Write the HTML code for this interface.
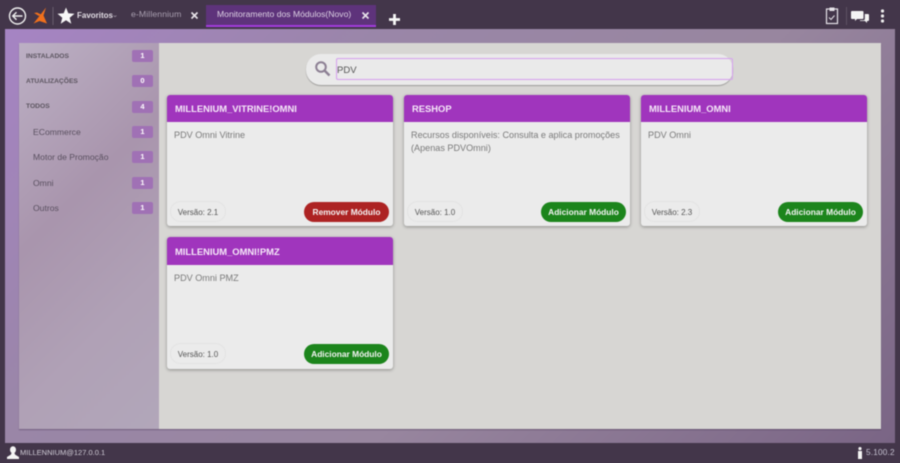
<!DOCTYPE html>
<html><head><meta charset="utf-8"><style>
*{box-sizing:border-box}
html,body{margin:0;padding:0;width:900px;height:463px;overflow:hidden;background:#43364a;font-family:"Liberation Sans",sans-serif}
#root{position:relative;width:900px;height:463px;filter:blur(.45px)}
.a{position:absolute;white-space:nowrap}
#frame{left:5px;top:29px;width:890px;height:414px;background:linear-gradient(135deg,#a684c4 0%,#9a86a8 30%,#98869f 60%,#7a6585 100%)}
#panel{left:19px;top:43px;width:862px;height:386px;background:#d7d6d3;box-shadow:0 1px 1px rgba(60,40,70,.4)}
#side{left:19px;top:43px;width:140px;height:386px;background:linear-gradient(135deg,#bcb0c4 0%,#a995ad 40%,#b0a1b6 70%,#b2a7ba 100%)}
.sl{font-size:6.7px;font-weight:bold;color:#5c5560;left:26px}
.si{font-size:8.6px;color:#5a5060;left:33px}
.bd{left:132px;width:21px;height:12px;background:#a071b5;border-radius:2px;color:#fff;font-size:7.5px;font-weight:bold;text-align:center;line-height:12px}
.card{width:226px;background:#ebebeb;border-radius:3px;box-shadow:0 1px 3px rgba(0,0,0,.35)}
.hd{left:0;top:0;width:100%;height:27px;background:#a035bd;border-radius:3px 3px 0 0;color:#f5e8f8;font-size:9.4px;font-weight:bold;line-height:28px;padding-left:8px}
.ds{left:7px;top:34px;font-size:9.1px;line-height:13px;color:#7a7a7a}
.vr{left:3px;top:106px;height:21px;width:56px;border:1px solid #e3e3e3;border-radius:11px;font-size:8px;color:#555;line-height:22px;text-align:center}
.bt{left:137px;top:107px;width:85px;height:20px;border-radius:10px;color:#f4f4f4;font-size:8.4px;font-weight:bold;line-height:21px;text-align:center}
.g{background:#1c851c}.r{background:#ad2323}
</style></head><body><div id="root">
<div class="a" id="frame"></div>
<div class="a" id="panel"></div>
<div class="a" id="side"></div>

<!-- top bar -->
<svg class="a" style="left:0;top:0" width="130" height="29" viewBox="0 0 130 29">
<circle cx="17.5" cy="16" r="8" fill="none" stroke="#eee" stroke-width="1.4"/>
<path d="M22.5 16H13M16.5 12.2L12.7 16l3.8 3.8" fill="none" stroke="#eee" stroke-width="1.4"/>
<path d="M46 7.5L41 14l-7.5 9.5 6-2.5 7.5 2.5-3.5-8z" fill="#f0701c"/>
<path d="M34 13l5 3 2-1.5-4-2z" fill="#f0701c"/>
<rect x="52.5" y="7" width="1" height="18" fill="#6a5e70"/>
<path d="M66 7.5l2.3 5.8 6.2.4-4.8 4 1.6 6-5.3-3.4-5.3 3.4 1.6-6-4.8-4 6.2-.4z" fill="#f7f7f7"/>
<path d="M113.5 15.5l1.5 1.2 1.5-1.2" fill="none" stroke="#9a8fa0" stroke-width=".8"/>
</svg>
<div class="a" style="left:77px;top:11px;font-size:8px;color:#e2dde4;font-weight:bold">Favoritos</div>
<div class="a" style="left:131px;top:9px;font-size:8.7px;color:#a99fb0;letter-spacing:.1px">e-Millennium</div>
<svg class="a" style="left:190px;top:11px" width="9" height="9"><path d="M1.5 1.5l6 6M7.5 1.5l-6 6" stroke="#e8e4ea" stroke-width="1.6"/></svg>
<div class="a" style="left:206px;top:5px;width:170px;height:22px;background:#5e337b;border-bottom:2px solid #a33bdc"></div>
<div class="a" style="left:217px;top:9px;font-size:8.6px;color:#ddd2e4">Monitoramento dos Módulos(Novo)</div>
<svg class="a" style="left:361px;top:11px" width="9" height="9"><path d="M1.5 1.5l6 6M7.5 1.5l-6 6" stroke="#e8e4ea" stroke-width="1.6"/></svg>
<svg class="a" style="left:389px;top:14px" width="11" height="11"><path d="M5.5 0v11M0 5.5h11" stroke="#f7f7f7" stroke-width="2.8"/></svg>

<svg class="a" style="left:820px;top:4px" width="70" height="24" viewBox="0 0 70 24">
<rect x="6.5" y="5" width="11" height="14.5" fill="none" stroke="#e6e3e8" stroke-width="1.2"/>
<rect x="9.5" y="3.5" width="5" height="3.5" fill="#e6e3e8"/>
<path d="M9 13.5l2 2 3.5-4" fill="none" stroke="#e6e3e8" stroke-width="1"/>
<rect x="26" y="3" width="1" height="18" fill="#5e5265"/>
<path d="M32 7h10.5a1 1 0 0 1 1 1v6a1 1 0 0 1-1 1H37l-2 2v-2h-3a1 1 0 0 1-1-1V8a1 1 0 0 1 1-1z" fill="#f4f4f4"/>
<path d="M44.8 10H48a1 1 0 0 1 1 1v5a1 1 0 0 1-1 1h-1v2l-2-2h-5v-.8h3.5a1.3 1.3 0 0 0 1.3-1.3z" fill="#f4f4f4"/>
<circle cx="62.5" cy="7" r="1.6" fill="#eee"/><circle cx="62.5" cy="12" r="1.6" fill="#eee"/><circle cx="62.5" cy="17" r="1.6" fill="#eee"/>
</svg>

<!-- sidebar -->
<div class="a sl" style="top:53px">INSTALADOS</div><div class="a bd" style="top:50px">1</div>
<div class="a sl" style="top:78px">ATUALIZAÇÕES</div><div class="a bd" style="top:75px">0</div>
<div class="a sl" style="top:103px">TODOS</div><div class="a bd" style="top:101px">4</div>
<div class="a si" style="top:127px">ECommerce</div><div class="a bd" style="top:126px">1</div>
<div class="a si" style="top:152px">Motor de Promoção</div><div class="a bd" style="top:151px">1</div>
<div class="a si" style="top:178px">Omni</div><div class="a bd" style="top:177px">1</div>
<div class="a si" style="top:203px">Outros</div><div class="a bd" style="top:202px">1</div>

<!-- search -->
<div class="a" style="left:306px;top:54px;width:427px;height:31px;background:#eaeaea;border-radius:15px;box-shadow:0 1px 1px rgba(0,0,0,.28)"></div>
<svg class="a" style="left:314px;top:60px" width="17" height="17" viewBox="0 0 17 17"><circle cx="7" cy="7" r="4.8" fill="none" stroke="#8d8094" stroke-width="2"/><path d="M10.5 10.5l5 5" stroke="#8d8094" stroke-width="2.4"/></svg>
<div class="a" style="left:336px;top:58px;width:397px;height:22px;border:1px solid #d6a3ee;box-shadow:inset 0 0 1px #e4c4f4;border-radius:2px;font-size:9.5px;color:#555;line-height:23px;padding-left:0">PDV</div>

<!-- cards -->
<div class="a card" style="left:167px;top:95px;height:131px"><div class="a hd">MILLENIUM_VITRINE!OMNI</div><div class="a ds">PDV Omni Vitrine</div><div class="a vr">Versão: 2.1</div><div class="a bt r">Remover Módulo</div></div>
<div class="a card" style="left:404px;top:95px;height:131px"><div class="a hd">RESHOP</div><div class="a ds">Recursos disponíveis: Consulta e aplica promoções<br>(Apenas PDVOmni)</div><div class="a vr">Versão: 1.0</div><div class="a bt g">Adicionar Módulo</div></div>
<div class="a card" style="left:641px;top:95px;height:131px"><div class="a hd">MILLENIUM_OMNI</div><div class="a ds">PDV Omni</div><div class="a vr">Versão: 2.3</div><div class="a bt g">Adicionar Módulo</div></div>
<div class="a card" style="left:167px;top:237px;height:132px"><div class="a hd" style="height:28px;line-height:29px">MILLENIUM_OMNI!PMZ</div><div class="a ds" style="top:35px">PDV Omni PMZ</div><div class="a vr">Versão: 1.0</div><div class="a bt g">Adicionar Módulo</div></div>

<!-- status bar -->
<svg class="a" style="left:7px;top:446px" width="12" height="13" viewBox="0 0 12 13"><ellipse cx="6" cy="3.8" rx="3" ry="3.6" fill="#f4f4f4"/><path d="M4.5 7h3l.6 1.6L12 11v2H0v-2l3.9-2.4z" fill="#f4f4f4"/></svg>
<div class="a" style="left:20px;top:448px;font-size:7.5px;color:#d0ccd6">MILLENNIUM@127.0.0.1</div>
<svg class="a" style="left:857px;top:447px" width="6" height="12" viewBox="0 0 6 12"><circle cx="3" cy="1.6" r="1.6" fill="#f4f4f4"/><rect x="1" y="4" width="4" height="8" fill="#f4f4f4"/></svg>
<div class="a" style="left:866px;top:448px;font-size:8.2px;color:#c6c2d2;letter-spacing:.2px">5.100.2</div>
</div></body></html>
